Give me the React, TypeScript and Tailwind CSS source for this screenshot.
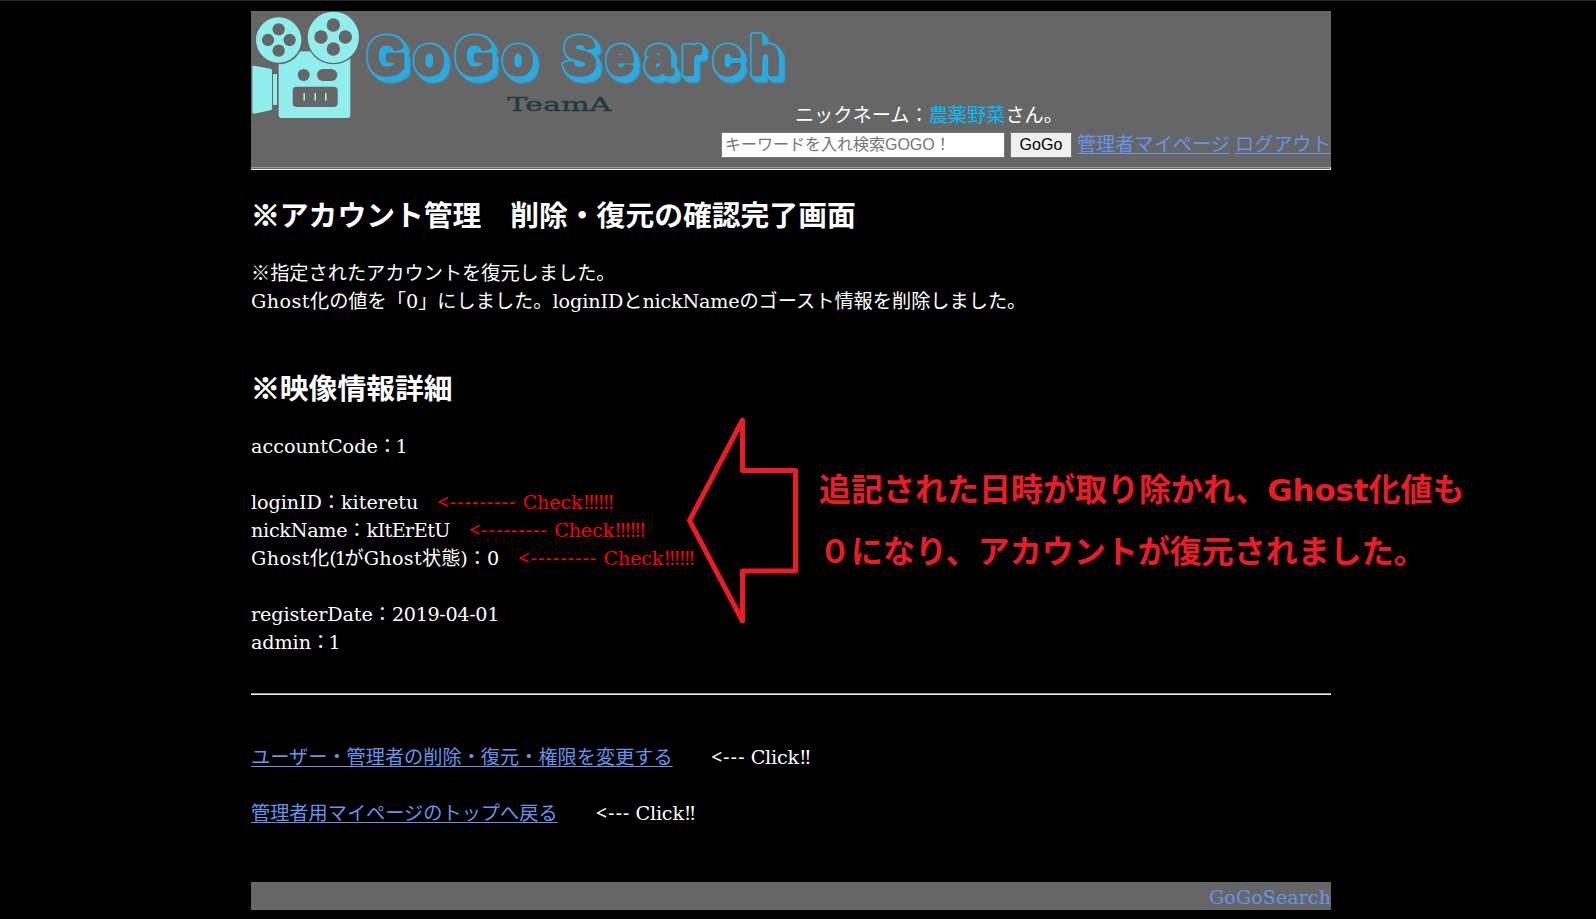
import type { ReactNode } from 'react';

const latin = 'font-["DejaVu_Serif",serif] leading-none';

function Latin({ children, className = '' }: { children: ReactNode; className?: string }) {
  return <span className={`${latin} ${className}`}>{children}</span>;
}

function Dashes({ children }: { children: string }) {
  return (
    <span className='font-["Noto_Sans",sans-serif] leading-none tracking-[1.25px] whitespace-pre'>
      {children}
    </span>
  );
}

function Check() {
  return (
    <span className="text-[#ff0000]">
      {'\u3000'}
      <Dashes>{'<---------'}</Dashes>
      <Latin className="ml-[6px] tracking-[-0.2px]">Check</Latin>
      <Latin className="tracking-[-2.75px]">!!!!!!</Latin>
    </span>
  );
}

function Click() {
  return (
    <>
      {'\u3000\u3000'}
      <Dashes>{'<---'}</Dashes>
      <Latin className="ml-[5px] tracking-[-0.2px]">Click</Latin>
      <Latin className="tracking-[-2.75px]">!!</Latin>
    </>
  );
}

function Mark() {
  return <span className="[-webkit-text-stroke:1.2px_white]">※</span>;
}

const linkClass =
  'text-[#6495ed] underline decoration-1 underline-offset-[2px] [text-decoration-skip-ink:none]';

const letterX = '412 563 696 849 1044 1183 1308 1426 1528 1646';

function Logo() {
  return (
    <svg viewBox="33 33 1620 330" className="block h-[110px] w-[540px]" role="img">
      <g fill="#90eeec">
        <path d="M116 150H331V344Q331 354 321 354H126Q116 354 116 344Z" />
        <path d="M37 198L42 197L92 206Q96 207 96 212V326Q96 330 92 331L42 341Q37 341 37 336Z" />
        <rect x="99" y="222" width="12" height="93" />
      </g>
      <g fill="#666">
        <rect x="110" y="140" width="230" height="14" />
        <circle cx="116" cy="120" r="73" />
        <circle cx="280" cy="112" r="81" />
        <circle cx="191" cy="225" r="18" />
        <rect x="231" y="207" width="61" height="36" rx="18" />
        <rect x="158" y="260" width="135" height="61" rx="12" />
      </g>
      <g fill="#90eeec">
        <circle cx="116" cy="120" r="68" />
        <circle cx="280" cy="112" r="77" />
        <rect x="190" y="279" width="5" height="23" />
        <rect x="223" y="279" width="5" height="23" />
        <rect x="255" y="279" width="5" height="23" />
      </g>
      <g fill="#666">
        <circle cx="116" cy="88" r="18.5" />
        <circle cx="84" cy="120" r="18.5" />
        <circle cx="149" cy="120" r="18.5" />
        <circle cx="116" cy="152" r="18.5" />
        <circle cx="280" cy="75" r="20" />
        <circle cx="243" cy="111" r="20" />
        <circle cx="316" cy="111" r="20" />
        <circle cx="280" cy="147" r="20" />
      </g>
      <g
        className='font-["Liberation_Sans",sans-serif] text-[156px] font-bold'
        strokeLinejoin="round"
        transform="scale(0.93 1)"
      >
        <g
          fill="#29abe2"
          stroke="#29abe2"
          strokeWidth="24"
          className="[filter:drop-shadow(2px_2px_0_#29abe2)_drop-shadow(4px_4px_0_#29abe2)_drop-shadow(8px_8px_0_#29abe2)]"
        >
          <text y="221" x={letterX}>GoGoSearch</text>
        </g>
        <text y="221" x={letterX} fill="#666" stroke="#666" strokeWidth="13">
          GoGoSearch
        </text>
      </g>
      <text
        x="802"
        y="333"
        textLength="312"
        lengthAdjust="spacingAndGlyphs"
        fill="#1f3a3f"
        stroke="#1f3a3f"
        strokeWidth="1"
        className='font-["DejaVu_Serif",serif] text-[55px]'
      >
        TeamA
      </text>
    </svg>
  );
}

function Header() {
  return (
    <header className="grid h-[159px] bg-[#666]">
      <div className="col-start-1 row-start-1">
        <Logo />
      </div>
      <div className="col-start-1 row-start-1 flex flex-col">
        <p className="mt-[89px] pr-[268px] text-right">
          ニックネーム：<span className="text-[#00bfff]">農薬野菜</span>さん。
        </p>
        <div className="mt-[3px] flex h-[28px] items-center justify-end">
          <input
            placeholder="キーワードを入れ検索GOGO！"
            className='h-[26px] w-[284px] border border-[#767676] bg-white px-[3px] font-["Liberation_Sans","Noto_Sans_CJK_JP",sans-serif] text-[16px] placeholder:text-[#757575]'
          />
          <button className='ml-[5px] h-[26px] w-[62px] border border-[#767676] bg-[#efefef] font-["Liberation_Sans",sans-serif] text-[16px] leading-none text-black'>
            GoGo
          </button>
          <a href="#mypage" className={`-mt-[5px] ml-[5px] ${linkClass}`}>管理者マイページ</a>
          <a href="#logout" className={`-mt-[5px] ml-[5px] ${linkClass}`}>ログアウト</a>
        </div>
        <div className="mt-auto h-[3px] border border-t-[#9a9a9a] border-r-[#eee] border-b-[#eee] border-l-[#9a9a9a]" />
      </div>
    </header>
  );
}

function Annotation() {
  return (
    <aside className="absolute top-[415px] left-[686px] flex text-[#ed1c24]">
      <svg viewBox="686 416 114 208" className="h-[208px] w-[114px] shrink-0">
        <path
          d="M742.5 420V470.5H795.5V571H742.5V621L689.5 520.5Z"
          fill="none"
          stroke="#ed1c24"
          strokeWidth="5"
          strokeLinejoin="round"
        />
      </svg>
      <div className="mt-[40px] ml-[19px] text-[32px] leading-[62px] font-bold whitespace-nowrap">
        <p>
          追記された日時が取り除かれ、
          <span className='font-["DejaVu_Sans",sans-serif] text-[31px] leading-none tracking-[-0.2px]'>Ghost</span>
          化値も
        </p>
        <p>０になり、アカウントが復元されました。</p>
      </div>
    </aside>
  );
}

export default function App() {
  return (
    <div className='relative h-[919px] w-[1596px] overflow-hidden border-t border-[#262626] bg-black pt-[10px] font-["Noto_Sans_CJK_JP",sans-serif] text-[19.2px] leading-[28px] text-white'>
      <div className="ml-[251px] w-[1080px]">
        <Header />
        <main>
          <h2 className="mt-[23px] text-[28.8px] leading-[42px] font-bold">
            <Mark />アカウント管理　削除・復元の確認完了画面
          </h2>
          <p className="mt-[23px]">
            ※指定されたアカウントを復元しました。
            <br />
            <Latin className="tracking-[0.44px]">Ghost</Latin>化の値を「<Latin>0</Latin>」にしました。
            <Latin className="tracking-[-0.1px]">loginID</Latin>と
            <Latin className="tracking-[-0.2px]">nickName</Latin>のゴースト情報を削除しました。
          </p>
          <h2 className="mt-[52px] text-[28.8px] leading-[42px] font-bold"><Mark />映像情報詳細</h2>
          <div className="mt-[23px] whitespace-nowrap">
            <p><Latin>accountCode</Latin>：<Latin className="-ml-[1.5px]">1</Latin></p>
            <p className="mt-[28px]">
              <Latin className="tracking-[-0.1px]">loginID</Latin>：<Latin>kiteretu</Latin>
              <Check />
            </p>
            <p>
              <Latin className="tracking-[-0.3px]">nickName</Latin>：
              <Latin className="tracking-[-0.56px]">kItErEtU</Latin>
              <Check />
            </p>
            <p>
              <Latin className="tracking-[0.44px]">Ghost</Latin>化
              <Latin className="tracking-[-2.2px]">(1</Latin>が
              <Latin className="tracking-[0.3px]">Ghost</Latin>状態<Latin>)</Latin>：<Latin>0</Latin>
              <Check />
            </p>
            <p className="mt-[28px]">
              <Latin className="tracking-[-0.1px]">registerDate</Latin>：
              <Latin className="tracking-[-0.35px]">2019-04-01</Latin>
            </p>
            <p><Latin className="tracking-[-0.1px]">admin</Latin>：<Latin className="-ml-[1.5px]">1</Latin></p>
          </div>
          <div className="mt-[38px] h-[2px] border-t border-b border-t-[#9a9a9a] border-b-[#eee]" />
          <nav className="mt-[47px] flex flex-col gap-[28px]">
            <p>
              <a href="#accounts" className={linkClass}>ユーザー・管理者の削除・復元・権限を変更する</a>
              <Click />
            </p>
            <p>
              <a href="#top" className={linkClass}>管理者用マイページのトップへ戻る</a>
              <Click />
            </p>
          </nav>
        </main>
        <footer className="mt-[56px] h-[28px] bg-[#666] text-right text-[#6495ed]">
          <Latin>GoGoSearch</Latin>
        </footer>
      </div>
      <Annotation />
    </div>
  );
}
